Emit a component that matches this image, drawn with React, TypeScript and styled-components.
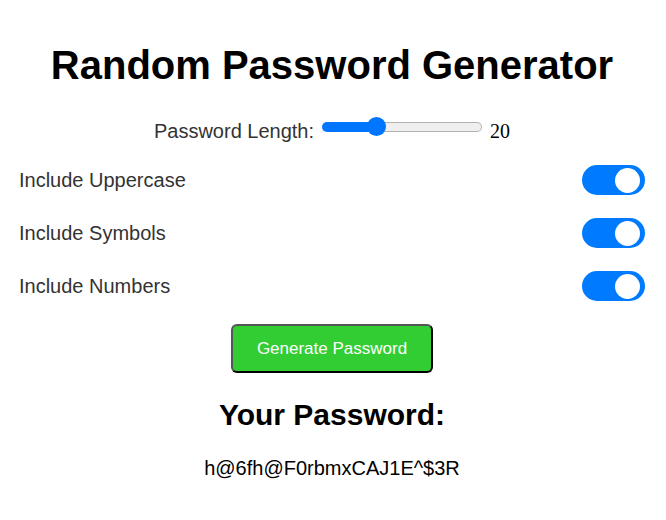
import React, { useState } from "react";
import styled, { createGlobalStyle } from "styled-components";

const GlobalStyle = createGlobalStyle`
  body {
    margin: 0;
    background: #fff;
    color: #000;
  }
`;

const Page = styled.main`
  display: flex;
  flex-direction: column;
  align-items: center;
  padding: 42px 21px 0 19px;
  font-family: "Liberation Sans", Arial, sans-serif;
  font-size: 20px;
  line-height: 23px;
`;

const Title = styled.h1`
  margin: 0 0 28px;
  font-size: 40px;
  line-height: 46px;
  font-weight: bold;
  white-space: nowrap;
`;

const LengthRow = styled.div`
  display: flex;
  align-items: center;
  gap: 8px;
  height: 30px;
`;

const Label = styled.label`
  color: #333;
`;

const Slider = styled.input`
  appearance: none;
  width: 160px;
  height: 20px;
  margin: 0 0 8px;
  background: transparent;
  cursor: pointer;

  &::-webkit-slider-runnable-track {
    box-sizing: border-box;
    height: 10px;
    border: 1px solid transparent;
    border-radius: 5px;
    background:
      linear-gradient(#0075ff, #0075ff) 0 0 / var(--filled) 100% no-repeat border-box,
      linear-gradient(#efefef, #efefef) padding-box,
      linear-gradient(#b2b2b2, #b2b2b2) border-box;
  }

  &::-webkit-slider-thumb {
    appearance: none;
    width: 19px;
    height: 19px;
    margin-top: -6px;
    border-radius: 50%;
    background: #0075ff;
  }
`;

const LengthValue = styled.output`
  font-family: "Liberation Serif", "Times New Roman", serif;
`;

const Options = styled.div`
  display: flex;
  flex-direction: column;
  gap: 23px;
  width: 100%;
  margin: 19px 0 23px;
`;

const OptionRow = styled.div`
  display: flex;
  align-items: center;
  justify-content: space-between;
`;

const Switch = styled.input`
  appearance: none;
  display: flex;
  align-items: center;
  width: 63px;
  height: 30px;
  margin: 0;
  padding: 0 5px;
  box-sizing: border-box;
  border-radius: 15px;
  background: #ccc;
  cursor: pointer;

  &::before {
    content: "";
    width: 25px;
    height: 25px;
    border-radius: 50%;
    background: #fff;
  }

  &:checked {
    justify-content: flex-end;
    background: #007bff;
  }
`;

const GenerateButton = styled.button`
  padding: 13px 24px;
  border: 2px solid;
  border-color: #555 #000 #000 #555;
  border-radius: 6px;
  background: #32cd32;
  color: #fff;
  font-family: inherit;
  font-size: 17px;
  line-height: 19px;
  cursor: pointer;
`;

const ResultTitle = styled.h2`
  margin: 24px 0 25px;
  font-size: 30px;
  line-height: 35px;
`;

const Password = styled.p`
  margin: 0;
`;

const MIN_LENGTH = 6;
const MAX_LENGTH = 50;

const OPTIONS = [
  { id: "uppercase", label: "Include Uppercase", chars: "ABCDEFGHIJKLMNOPQRSTUVWXYZ" },
  { id: "symbols", label: "Include Symbols", chars: "!@#$%^&*" },
  { id: "numbers", label: "Include Numbers", chars: "0123456789" },
];

export default function App() {
  const [length, setLength] = useState(20);
  const [enabled, setEnabled] = useState<Record<string, boolean>>({
    uppercase: true,
    symbols: true,
    numbers: true,
  });
  const [password, setPassword] = useState("h@6fh@F0rbmxCAJ1E^$3R");

  const filled = ((length - MIN_LENGTH) / (MAX_LENGTH - MIN_LENGTH)) * 100;

  const generate = () => {
    const pool = OPTIONS.reduce(
      (all, option) => (enabled[option.id] ? all + option.chars : all),
      "abcdefghijklmnopqrstuvwxyz",
    );
    setPassword(
      Array.from({ length }, () => pool[Math.floor(Math.random() * pool.length)]).join(""),
    );
  };

  return (
    <Page>
      <GlobalStyle />
      <Title>Random Password Generator</Title>
      <LengthRow>
        <Label htmlFor="length">Password Length:</Label>
        <Slider
          id="length"
          type="range"
          min={MIN_LENGTH}
          max={MAX_LENGTH}
          value={length}
          style={{ "--filled": `${filled}%` } as React.CSSProperties}
          onChange={(e) => setLength(Number(e.target.value))}
        />
        <LengthValue htmlFor="length">{length}</LengthValue>
      </LengthRow>
      <Options>
        {OPTIONS.map(({ id, label }) => (
          <OptionRow key={id}>
            <Label htmlFor={id}>{label}</Label>
            <Switch
              id={id}
              type="checkbox"
              role="switch"
              checked={enabled[id]}
              onChange={(e) => setEnabled({ ...enabled, [id]: e.target.checked })}
            />
          </OptionRow>
        ))}
      </Options>
      <GenerateButton type="button" onClick={generate}>
        Generate Password
      </GenerateButton>
      <ResultTitle>Your Password:</ResultTitle>
      <Password>{password}</Password>
    </Page>
  );
}
